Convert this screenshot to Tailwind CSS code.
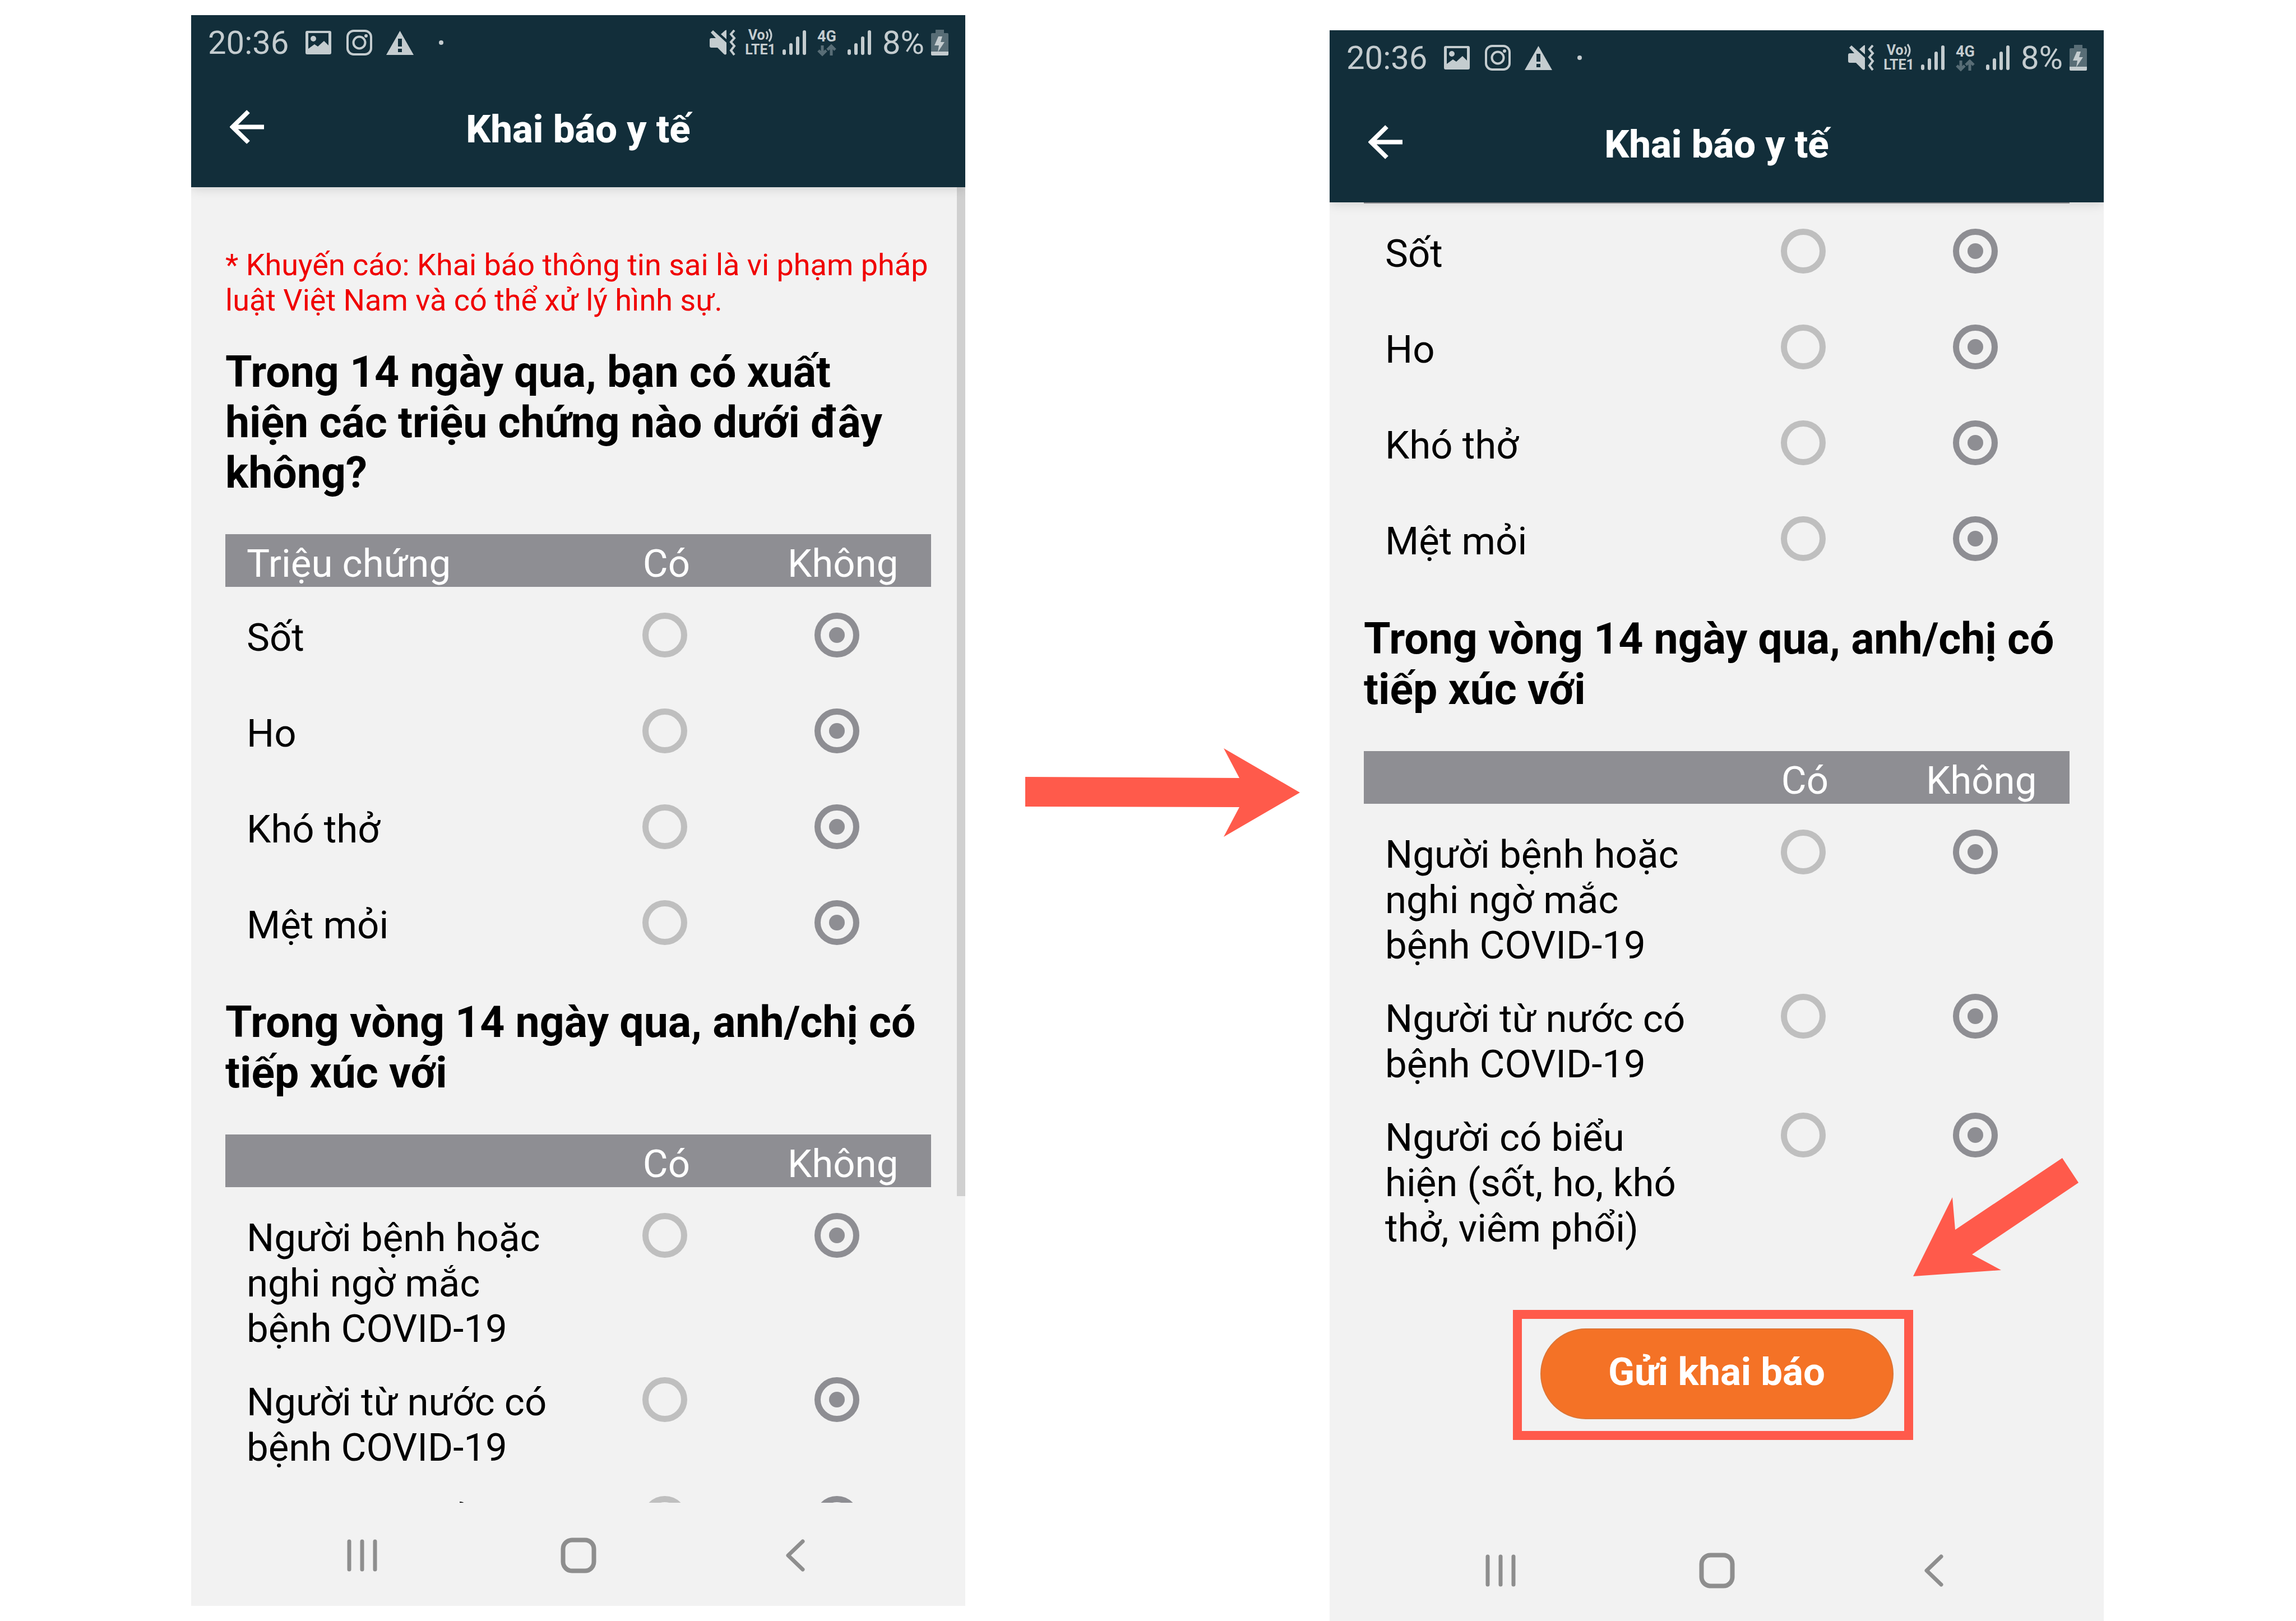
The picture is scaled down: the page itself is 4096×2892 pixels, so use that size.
<!DOCTYPE html>
<html lang="vi">
<head>
<meta charset="utf-8">
<title>Khai báo y tế</title>
<script src="https://cdn.jsdelivr.net/npm/@tailwindcss/browser@4"></script>
</head>
<body class="bg-white font-['Roboto',sans-serif] text-black">

<!-- shared icons -->
<svg class="hidden" aria-hidden="true">
  <symbol id="i-image" viewBox="0 0 46 42"><path fill="currentColor" fill-rule="evenodd" d="M3 0H43Q46 0 46 3V39Q46 42 43 42H3Q0 42 0 39V3Q0 0 3 0ZM5 4V32L16 24L22 28L33 18L41 26V4Z"/><circle cx="14" cy="14" r="5" fill="currentColor"/></symbol>
  <symbol id="i-insta" viewBox="0 0 46 46"><g fill="none" stroke="currentColor" stroke-width="4"><rect x="2" y="2" width="42" height="42" rx="11"/><circle cx="23" cy="23" r="10.500"/></g><circle cx="35" cy="11" r="3" fill="currentColor"/></symbol>
  <symbol id="i-warn" viewBox="0 0 49 43"><path fill="currentColor" fill-rule="evenodd" d="M24.500 0L49 43H0ZM21 14V28H28V14ZM21 32V38H28V32Z"/></symbol>
  <symbol id="i-mute" viewBox="0 0 47 46"><path fill="currentColor" d="M6 1L30 23V43Q28 46 25 43L14 32H3Q0 32 0 29V18Q0 15 3 15H11L2 5ZM30 1V17L20 8L28 1Q30 0 30 1Z"/><path fill="none" stroke="currentColor" stroke-width="4" d="M44 1L38 8L44 15L38 22L44 29L38 37L44 45"/></symbol>
  <symbol id="i-waves" viewBox="0 0 14 26"><path fill="none" stroke="currentColor" stroke-width="3" d="M2 6Q7 13 2 20M7 2Q15 13 7 24"/></symbol>
  <symbol id="i-signal" viewBox="0 0 42 44"><path stroke="currentColor" stroke-width="6" stroke-linecap="round" d="M3 37V41M15 26V41M27 14V41M39 3V41"/></symbol>
  <symbol id="i-updown" viewBox="0 0 34 22"><path fill="none" stroke="currentColor" stroke-width="5" d="M9 2V17M2 11L9 18L16 11M25 20V5M18 10L25 3L32 10"/></symbol>
  <symbol id="i-battery" viewBox="0 0 31 46"><path fill="#586d76" d="M8 0H23V6H29Q31 6 31 8V39H0V8Q0 6 2 6H8Z"/><path fill="#c4cccf" d="M0 39H31V44Q31 46 29 46H2Q0 46 0 44ZM13 12H20L17 22H24L12 40L14 28H6Z"/></symbol>
  <symbol id="i-back" viewBox="0 0 61 61"><path fill="none" stroke="currentColor" stroke-width="8" d="M33 3L5 30.500L33 58M6 30.500H61"/></symbol>
  <symbol id="i-recent" viewBox="0 0 64 64"><path stroke="currentColor" stroke-width="7" stroke-linecap="round" d="M9 7V57M32 7V57M55 7V57"/></symbol>
  <symbol id="i-home" viewBox="0 0 64 64"><rect x="4.500" y="4.500" width="55" height="55" rx="16" fill="none" stroke="currentColor" stroke-width="8"/></symbol>
  <symbol id="i-prev" viewBox="0 0 64 64"><path fill="none" stroke="currentColor" stroke-width="7" stroke-linecap="round" stroke-linejoin="round" d="M46 7L20 32L46 57"/></symbol>
</svg>

<main class="grid min-h-screen grid-cols-[341fr_1381fr_650fr_1381fr_343fr] items-start">

  <!-- step 1: top of the form -->
  <section class="relative col-start-2 mt-[27px] flex aspect-[1381/2838] flex-col overflow-hidden bg-[#f2f2f2]">
    <header class="relative z-10 bg-[#122e3a] shadow-[0_2px_20px_rgba(0,0,0,0.15)]">
      <div class="flex h-[92px] items-center justify-between px-[30px] pt-[6px] text-[58px] leading-[68px] text-[#c4cccf]">
        <div class="flex items-center">
          <time>20:36</time>
          <svg class="ml-[30px] h-[42px] w-[46px]"><use href="#i-image"/></svg>
          <svg class="ml-[27px] size-[46px]"><use href="#i-insta"/></svg>
          <svg class="ml-[25px] h-[43px] w-[49px]"><use href="#i-warn"/></svg>
          <span class="ml-[45px] size-2 rounded-full bg-[#c4cccf]"></span>
        </div>
        <div class="flex items-center">
          <svg class="h-[46px] w-[47px]"><use href="#i-mute"/></svg>
          <div class="ml-4 flex flex-col items-center text-[25px] font-bold leading-[26px]">
            <span class="flex items-center">Vo<svg class="h-[26px] w-[14px]"><use href="#i-waves"/></svg></span>
            <span>LTE1</span>
          </div>
          <svg class="ml-3 h-[44px] w-[42px]"><use href="#i-signal"/></svg>
          <div class="ml-5 flex flex-col items-center text-[27px] font-bold leading-[28px]">
            <span>4G</span>
            <svg class="h-[22px] w-[34px] text-[#586d76]"><use href="#i-updown"/></svg>
          </div>
          <svg class="ml-5 h-[44px] w-[42px]"><use href="#i-signal"/></svg>
          <span class="ml-5">8%</span>
          <svg class="ml-3 h-[46px] w-[31px]"><use href="#i-battery"/></svg>
        </div>
      </div>
      <div class="grid h-[215px] grid-cols-[1fr_auto_1fr] items-center px-[69px] text-white">
        <button type="button" aria-label="Quay lại" class="size-[61px]"><svg class="size-[61px]"><use href="#i-back"/></svg></button>
        <h1 class="pt-2 text-[69px] font-extrabold leading-[81px]">Khai báo y tế</h1>
      </div>
    </header>

    <div class="min-h-0 flex-1 overflow-hidden px-[61px] pt-[107px]">
      <p class="text-[54px] leading-[63px] text-[#f00000]">* Khuyến cáo: Khai báo thông tin sai là vi phạm pháp luật Việt Nam và có thể xử lý hình sự.</p>
      <h2 class="mt-[52px] pr-5 text-[77px] font-bold leading-[90px]">Trong 14 ngày qua, bạn có xuất hiện các triệu chứng nào dưới đây không?</h2>
      <table class="mt-16 w-full table-fixed text-[69px] leading-[81px] [&_input]:mx-auto [&_input]:grid [&_input]:size-20 [&_input]:appearance-none [&_input]:place-items-center [&_input]:rounded-full [&_input]:border-[11px] [&_input]:border-[#bfbfbf] [&_input:checked]:border-[#8e8e93] [&_input:checked]:before:size-7 [&_input:checked]:before:rounded-full [&_input:checked]:before:bg-[#8e8e93] [&_tbody_th]:pt-[50px] [&_td]:pt-[46px] [&_td]:pb-[45px] [&_td]:pr-[6px] [&_td:last-child]:pr-[22px] [&_th]:font-normal [&_tbody_th]:pl-[38px] [&_tbody_th]:pr-10 [&_tbody_th]:text-left [&_td]:align-top [&_th]:align-top">
        <thead class="bg-[#8e8e93] text-white"><tr><th class="w-1/2 pt-3 pb-px pl-[38px] text-left">Triệu chứng</th><th class="w-1/4 pt-3 pb-px">Có</th><th class="w-1/4 pt-3 pb-px">Không</th></tr></thead>
        <tbody>
          <tr><th scope="row">Sốt</th><td><input type="radio" name="a1" aria-label="Sốt: Có"></td><td><input type="radio" name="a1" aria-label="Sốt: Không" checked></td></tr>
          <tr><th scope="row">Ho</th><td><input type="radio" name="a2" aria-label="Ho: Có"></td><td><input type="radio" name="a2" aria-label="Ho: Không" checked></td></tr>
          <tr><th scope="row">Khó thở</th><td><input type="radio" name="a3" aria-label="Khó thở: Có"></td><td><input type="radio" name="a3" aria-label="Khó thở: Không" checked></td></tr>
          <tr><th scope="row">Mệt mỏi</th><td><input type="radio" name="a4" aria-label="Mệt mỏi: Có"></td><td><input type="radio" name="a4" aria-label="Mệt mỏi: Không" checked></td></tr>
        </tbody>
      </table>
      <h2 class="mt-12 text-[77px] font-bold leading-[90px]">Trong vòng 14 ngày qua, anh/chị có tiếp xúc với</h2>
      <table class="mt-[65px] w-full table-fixed text-[69px] leading-[81px] [&_input]:mx-auto [&_input]:grid [&_input]:size-20 [&_input]:appearance-none [&_input]:place-items-center [&_input]:rounded-full [&_input]:border-[11px] [&_input]:border-[#bfbfbf] [&_input:checked]:border-[#8e8e93] [&_input:checked]:before:size-7 [&_input:checked]:before:rounded-full [&_input:checked]:before:bg-[#8e8e93] [&_tbody_th]:pt-[50px] [&_td]:pt-[46px] [&_td]:pb-[45px] [&_td]:pr-[6px] [&_td:last-child]:pr-[22px] [&_th]:font-normal [&_tbody_th]:pl-[38px] [&_tbody_th]:pr-10 [&_tbody_th]:text-left [&_td]:align-top [&_th]:align-top">
        <thead class="bg-[#8e8e93] text-white"><tr><td class="w-1/2"></td><th class="w-1/4 pt-3 pb-px">Có</th><th class="w-1/4 pt-3 pb-px">Không</th></tr></thead>
        <tbody>
          <tr><th scope="row">Người bệnh hoặc nghi ngờ mắc bệnh COVID-19</th><td><input type="radio" name="a5" aria-label="Người bệnh: Có"></td><td><input type="radio" name="a5" aria-label="Người bệnh: Không" checked></td></tr>
          <tr><th scope="row">Người từ nước có bệnh COVID-19</th><td><input type="radio" name="a6" aria-label="Người từ nước có bệnh: Có"></td><td><input type="radio" name="a6" aria-label="Người từ nước có bệnh: Không" checked></td></tr>
          <tr><th scope="row">Người có biểu hiện (sốt, ho, khó thở, viêm phổi)</th><td><input type="radio" name="a7" aria-label="Người có biểu hiện: Có"></td><td><input type="radio" name="a7" aria-label="Người có biểu hiện: Không" checked></td></tr>
        </tbody>
      </table>
    </div>
    <div class="absolute top-[307px] right-0 h-[1800px] w-[15px] bg-[#d0d0d0]"></div>

    <nav class="flex h-[184px] shrink-0 items-center justify-center gap-[322px] pt-1 text-[#8e8e8e]">
      <button type="button" aria-label="Gần đây"><svg class="size-16"><use href="#i-recent"/></svg></button>
      <button type="button" aria-label="Trang chủ"><svg class="size-16"><use href="#i-home"/></svg></button>
      <button type="button" aria-label="Trở về"><svg class="size-16"><use href="#i-prev"/></svg></button>
    </nav>
  </section>

  <!-- arrow between the steps -->
  <div class="flex items-center self-center pb-16 pl-[107px]">
    <svg class="h-[158px] w-[490px] fill-[#ff5a4b]" viewBox="0 0 490 158"><path d="M0 51L382 53L354 0L490 79L354 158L382 105L0 104Z"/></svg>
  </div>

  <!-- step 2: end of the form -->
  <section class="relative col-start-4 mt-[54px] flex aspect-[1381/2838] flex-col overflow-hidden bg-[#f2f2f2]">
    <header class="relative z-10 bg-[#122e3a] shadow-[0_2px_20px_rgba(0,0,0,0.15)]">
      <div class="flex h-[92px] items-center justify-between px-[30px] pt-[6px] text-[58px] leading-[68px] text-[#c4cccf]">
        <div class="flex items-center">
          <time>20:36</time>
          <svg class="ml-[30px] h-[42px] w-[46px]"><use href="#i-image"/></svg>
          <svg class="ml-[27px] size-[46px]"><use href="#i-insta"/></svg>
          <svg class="ml-[25px] h-[43px] w-[49px]"><use href="#i-warn"/></svg>
          <span class="ml-[45px] size-2 rounded-full bg-[#c4cccf]"></span>
        </div>
        <div class="flex items-center">
          <svg class="h-[46px] w-[47px]"><use href="#i-mute"/></svg>
          <div class="ml-4 flex flex-col items-center text-[25px] font-bold leading-[26px]">
            <span class="flex items-center">Vo<svg class="h-[26px] w-[14px]"><use href="#i-waves"/></svg></span>
            <span>LTE1</span>
          </div>
          <svg class="ml-3 h-[44px] w-[42px]"><use href="#i-signal"/></svg>
          <div class="ml-5 flex flex-col items-center text-[27px] font-bold leading-[28px]">
            <span>4G</span>
            <svg class="h-[22px] w-[34px] text-[#586d76]"><use href="#i-updown"/></svg>
          </div>
          <svg class="ml-5 h-[44px] w-[42px]"><use href="#i-signal"/></svg>
          <span class="ml-5">8%</span>
          <svg class="ml-3 h-[46px] w-[31px]"><use href="#i-battery"/></svg>
        </div>
      </div>
      <div class="grid h-[215px] grid-cols-[1fr_auto_1fr] items-center px-[69px] text-white">
        <button type="button" aria-label="Quay lại" class="size-[61px]"><svg class="size-[61px]"><use href="#i-back"/></svg></button>
        <h1 class="pt-2 text-[69px] font-extrabold leading-[81px]">Khai báo y tế</h1>
      </div>
    </header>

    <div class="min-h-0 flex-1 px-[61px]">
      <table class="w-full table-fixed border-t-2 border-[#8e8e93] text-[69px] leading-[81px] [&_input]:mx-auto [&_input]:grid [&_input]:size-20 [&_input]:appearance-none [&_input]:place-items-center [&_input]:rounded-full [&_input]:border-[11px] [&_input]:border-[#bfbfbf] [&_input:checked]:border-[#8e8e93] [&_input:checked]:before:size-7 [&_input:checked]:before:rounded-full [&_input:checked]:before:bg-[#8e8e93] [&_tbody_th]:pt-[49px] [&_td]:pt-[45px] [&_td]:pb-[46px] [&_td]:pr-[6px] [&_td:last-child]:pr-[22px] [&_th]:font-normal [&_tbody_th]:pl-[38px] [&_tbody_th]:pr-10 [&_tbody_th]:text-left [&_td]:align-top [&_th]:align-top">
        <colgroup><col class="w-1/2"><col class="w-1/4"><col class="w-1/4"></colgroup>
        <tbody>
          <tr><th scope="row">Sốt</th><td><input type="radio" name="b1" aria-label="Sốt: Có"></td><td><input type="radio" name="b1" aria-label="Sốt: Không" checked></td></tr>
          <tr><th scope="row">Ho</th><td><input type="radio" name="b2" aria-label="Ho: Có"></td><td><input type="radio" name="b2" aria-label="Ho: Không" checked></td></tr>
          <tr><th scope="row">Khó thở</th><td><input type="radio" name="b3" aria-label="Khó thở: Có"></td><td><input type="radio" name="b3" aria-label="Khó thở: Không" checked></td></tr>
          <tr><th scope="row">Mệt mỏi</th><td><input type="radio" name="b4" aria-label="Mệt mỏi: Có"></td><td><input type="radio" name="b4" aria-label="Mệt mỏi: Không" checked></td></tr>
        </tbody>
      </table>
      <h2 class="mt-12 text-[77px] font-bold leading-[90px]">Trong vòng 14 ngày qua, anh/chị có tiếp xúc với</h2>
      <table class="mt-[65px] w-full table-fixed text-[69px] leading-[81px] [&_input]:mx-auto [&_input]:grid [&_input]:size-20 [&_input]:appearance-none [&_input]:place-items-center [&_input]:rounded-full [&_input]:border-[11px] [&_input]:border-[#bfbfbf] [&_input:checked]:border-[#8e8e93] [&_input:checked]:before:size-7 [&_input:checked]:before:rounded-full [&_input:checked]:before:bg-[#8e8e93] [&_tbody_th]:pt-[50px] [&_td]:pt-[46px] [&_td]:pb-[45px] [&_td]:pr-[6px] [&_td:last-child]:pr-[22px] [&_th]:font-normal [&_tbody_th]:pl-[38px] [&_tbody_th]:pr-10 [&_tbody_th]:text-left [&_td]:align-top [&_th]:align-top">
        <thead class="bg-[#8e8e93] text-white"><tr><td class="w-1/2"></td><th class="w-1/4 pt-3 pb-px">Có</th><th class="w-1/4 pt-3 pb-px">Không</th></tr></thead>
        <tbody>
          <tr><th scope="row">Người bệnh hoặc nghi ngờ mắc bệnh COVID-19</th><td><input type="radio" name="b5" aria-label="Người bệnh: Có"></td><td><input type="radio" name="b5" aria-label="Người bệnh: Không" checked></td></tr>
          <tr><th scope="row">Người từ nước có bệnh COVID-19</th><td><input type="radio" name="b6" aria-label="Người từ nước có bệnh: Có"></td><td><input type="radio" name="b6" aria-label="Người từ nước có bệnh: Không" checked></td></tr>
          <tr><th scope="row">Người có biểu hiện (sốt, ho, khó thở, viêm phổi)</th><td><input type="radio" name="b7" aria-label="Người có biểu hiện: Có"></td><td><input type="radio" name="b7" aria-label="Người có biểu hiện: Không" checked></td></tr>
        </tbody>
      </table>
      <div class="relative mx-auto mt-[138px] w-[630px]">
        <button type="button" class="h-[162px] w-full rounded-full border-2 border-[#dd7536] bg-[#f47226] pb-2 text-[69px] font-bold leading-[81px] text-white">Gửi khai báo</button>
        <!-- highlight frame and pointer -->
        <div class="absolute -top-[33px] -right-[35px] -bottom-[37px] -left-[49px] border-[16px] border-[#ff5a4b]"></div>
        <svg class="absolute bottom-full left-full mb-[93px] ml-[35px] h-[211px] w-[295px] fill-[#ff5a4b]" viewBox="0 0 295 211"><path d="M0 211L70 70L75 128L266 0L295 44L105 172L157 200Z"/></svg>
      </div>
    </div>

    <nav class="flex h-[184px] shrink-0 items-center justify-center gap-[322px] pt-1 text-[#8e8e8e]">
      <button type="button" aria-label="Gần đây"><svg class="size-16"><use href="#i-recent"/></svg></button>
      <button type="button" aria-label="Trang chủ"><svg class="size-16"><use href="#i-home"/></svg></button>
      <button type="button" aria-label="Trở về"><svg class="size-16"><use href="#i-prev"/></svg></button>
    </nav>
  </section>
</main>
</body>
</html>
